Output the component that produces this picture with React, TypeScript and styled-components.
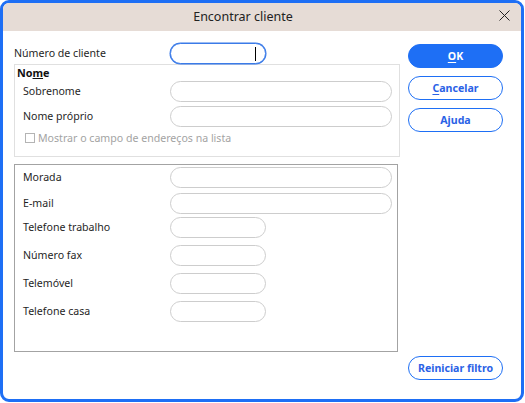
import React from "react";
import styled, { createGlobalStyle } from "styled-components";

const Global = createGlobalStyle`
  html, body { margin: 0; padding: 0; background: #ffffff; }
  body { font-family: "Noto Sans", "Open Sans", Arial, sans-serif; }
  * { box-sizing: border-box; }
`;

const BLUE = "#1e6ff5";

const Window = styled.div`
  width: 524px;
  height: 402px;
  border: 3px solid ${BLUE};
  border-radius: 9px;
  overflow: hidden;
  background: #ffffff;
  display: flex;
  flex-direction: column;
`;

const TitleBar = styled.div`
  height: 28px;
  background: #e6dcd6;
  display: flex;
  align-items: center;
  flex: none;
`;

const Title = styled.div`
  flex: 1;
  text-align: center;
  font-size: 12.5px;
  color: #222222;
  padding-bottom: 2px;
`;

const CloseButton = styled.div`
  width: 38px;
  height: 28px;
  display: flex;
  align-items: center;
  justify-content: center;
  padding-left: 5px;
  padding-bottom: 4px;
`;

const Body = styled.div`
  flex: 1;
  display: flex;
  gap: 8px;
  padding: 12px 18px 19px 11px;
`;

const LeftColumn = styled.div`
  width: 386px;
  display: flex;
  flex-direction: column;
`;

const RightColumn = styled.div`
  width: 96px;
  display: flex;
  flex-direction: column;
  gap: 8px;
  padding-top: 1px;
`;

const Row = styled.div<{ $indent?: number; $top?: number; $col?: number }>`
  display: grid;
  grid-template-columns: ${(p) => p.$col ?? 156}px auto;
  align-items: center;
  padding-left: ${(p) => p.$indent ?? 0}px;
  margin-top: ${(p) => p.$top ?? 0}px;
  height: 21px;
`;

const Label = styled.div`
  font-size: 10.6px;
  color: #1f1f1f;
  padding-bottom: 2px;
  white-space: nowrap;
`;

const Field = styled.div<{ $wide?: boolean; $focused?: boolean }>`
  position: relative;
  width: ${(p) => (p.$wide ? 222 : 96)}px;
  height: 21px;
  border-radius: 11px;
  background: #ffffff;
  border: 1px solid ${(p) => (p.$focused ? "#3b7be8" : "#cdcdcd")};
  box-shadow: ${(p) => (p.$focused ? "0 0 0 0.5px #3b7be8" : "none")};
`;

const Caret = styled.span`
  position: absolute;
  left: 84px;
  top: 3px;
  width: 1px;
  height: 14px;
  background: #000000;
`;

const GroupBox = styled.div<{ $dark?: boolean; $height: number; $top: number }>`
  width: ${(p) => (p.$dark ? 384 : 386)}px;
  height: ${(p) => p.$height}px;
  margin-top: ${(p) => p.$top}px;
  border: 1px solid ${(p) => (p.$dark ? "#a3a3a3" : "#e0e0e0")};
  display: flex;
  flex-direction: column;
`;

const Legend = styled.div`
  font-size: 10.8px;
  font-weight: 700;
  color: #111111;
  height: 14px;
  line-height: 14px;
  padding-left: 2px;
  margin-top: 1px;
`;

const CheckRow = styled.label`
  display: flex;
  align-items: center;
  gap: 3px;
  margin-top: 4px;
  padding-left: 10px;
  height: 14px;
  font-size: 10.6px;
  color: #a3a3a3;
`;

const CheckBox = styled.span`
  width: 10px;
  height: 10px;
  border: 1px solid #b4b4b4;
  background: #ffffff;
  flex: none;
`;

const Button = styled.div<{ $primary?: boolean; $push?: boolean }>`
  height: 24px;
  border-radius: 12px;
  border: 1px solid ${BLUE};
  background: ${(p) => (p.$primary ? BLUE : "#ffffff")};
  color: ${(p) => (p.$primary ? "#ffffff" : "#2a62e6")};
  font-size: 10.6px;
  font-weight: 700;
  display: flex;
  align-items: center;
  justify-content: center;
  margin-top: ${(p) => (p.$push ? "auto" : "0")};
  padding-bottom: 1px;
  u { text-underline-offset: 2px; }
`;

const CloseIcon = () => (
  <svg width="11" height="11" viewBox="0 0 11 11">
    <path d="M0.5 0.5 L10.5 10.5 M10.5 0.5 L0.5 10.5" stroke="#222" strokeWidth="1" fill="none" />
  </svg>
);

const contactRows: { label: string; wide: boolean; top: number }[] = [
  { label: "Morada", wide: true, top: 2 },
  { label: "E-mail", wide: true, top: 5 },
  { label: "Telefone trabalho", wide: false, top: 3 },
  { label: "Número fax", wide: false, top: 7 },
  { label: "Telemóvel", wide: false, top: 7 },
  { label: "Telefone casa", wide: false, top: 7 },
];

export default function App() {
  return (
    <>
      <Global />
      <Window>
        <TitleBar>
          <Title>Encontrar cliente</Title>
          <CloseButton>
            <CloseIcon />
          </CloseButton>
        </TitleBar>
        <Body>
          <LeftColumn>
            <Row>
              <Label>Número de cliente</Label>
              <Field $focused>
                <Caret />
              </Field>
            </Row>
            <GroupBox $height={93} $top={0}>
              <Legend>
                No<u>m</u>e
              </Legend>
              <Row $indent={8} $col={147} $top={1}>
                <Label>Sobrenome</Label>
                <Field $wide />
              </Row>
              <Row $indent={8} $col={147} $top={4}>
                <Label>Nome próprio</Label>
                <Field $wide />
              </Row>
              <CheckRow>
                <CheckBox />
                Mostrar o campo de endereços na lista
              </CheckRow>
            </GroupBox>
            <GroupBox $dark $height={188} $top={7}>
              {contactRows.map((r) => (
                <Row key={r.label} $indent={8} $col={147} $top={r.top}>
                  <Label>{r.label}</Label>
                  <Field $wide={r.wide} />
                </Row>
              ))}
            </GroupBox>
          </LeftColumn>
          <RightColumn>
            <Button $primary>
              <span>
                <u>O</u>K
              </span>
            </Button>
            <Button>
              <span>
                <u>C</u>ancelar
              </span>
            </Button>
            <Button>Ajuda</Button>
            <Button $push>Reiniciar filtro</Button>
          </RightColumn>
        </Body>
      </Window>
    </>
  );
}
